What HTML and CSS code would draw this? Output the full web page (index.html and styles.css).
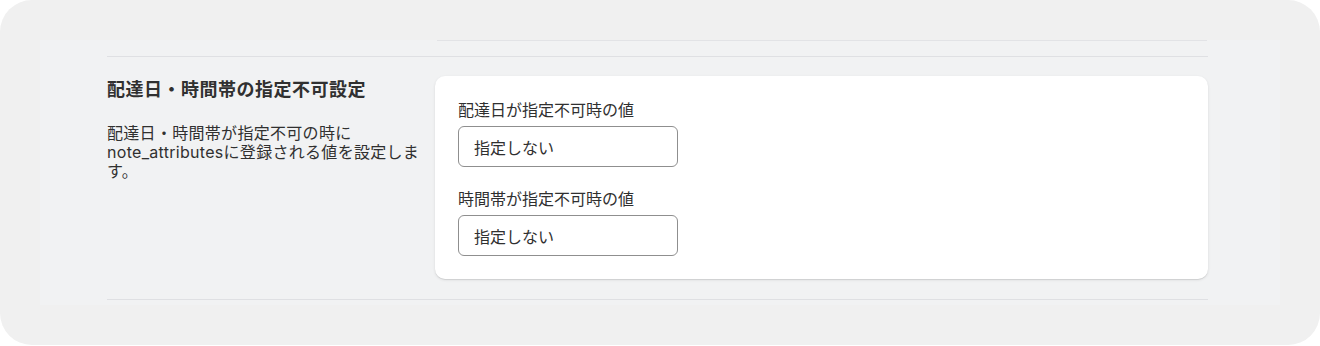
FILE: index.html
```html
<!DOCTYPE html>
<html lang="ja">
<head>
    <meta charset="UTF-8">
    <meta name="viewport" content="width=device-width, initial-scale=1.0">
    <title>配達日・時間帯の指定不可設定</title>
    <link rel="stylesheet" href="styles.css">
</head>
<body>
    <div class="frame">
        <div class="page">
            <div class="prev-card-edge"></div>

            <div class="section">
                <div class="section-info">
                    <h2 class="section-title">配達日・時間帯の指定不可設定</h2>
                    <p class="section-desc">配達日・時間帯が指定不可の時に note_attributesに登録される値を設定します。</p>
                </div>

                <div class="card">
                    <div class="field">
                        <label class="field-label" for="dateValue">配達日が指定不可時の値</label>
                        <input id="dateValue" class="text-input" type="text" value="指定しない">
                    </div>
                    <div class="field">
                        <label class="field-label" for="timeValue">時間帯が指定不可時の値</label>
                        <input id="timeValue" class="text-input" type="text" value="指定しない">
                    </div>
                </div>
            </div>
        </div>
    </div>
</body>
</html>
```

FILE: styles.css
```css
* {
    margin: 0;
    padding: 0;
    box-sizing: border-box;
    font-family: Inter, 'Noto Sans CJK JP', sans-serif;
}

body {
    background-color: #ffffff;
    color: #303030;
}

.frame {
    height: 345px;
    border-radius: 32px;
    background-color: #f0f0f0;
    padding: 40px 40px 40px 40px;
}

.page {
    height: 265px;
    background-color: #f1f2f3;
    padding: 0 72px 0 67px;
}

.prev-card-edge {
    height: 1px;
    margin-left: 330px;
    margin-right: 1px;
    background-color: #e2e3e6;
}

.section {
    margin-top: 15px;
    border-top: 1px solid #dfe0e3;
    border-bottom: 1px solid #dfe0e3;
    padding: 19px 0 20px;
    display: grid;
    grid-template-columns: 322px 1fr;
    gap: 6px;
}

.section-info {
    padding-top: 2px;
}

.section-title {
    font-size: 18px;
    line-height: 24px;
    font-weight: 700;
    letter-spacing: 0.5px;
}

.section-desc {
    margin-top: 22px;
    font-size: 16px;
    line-height: 19px;
    letter-spacing: 0.3px;
}

.card {
    background-color: #ffffff;
    border-radius: 10px;
    padding: 24px 23px 23px;
    box-shadow: 0 1px 0 rgba(0, 0, 0, 0.07), 0 1px 3px rgba(0, 0, 0, 0.1);
    display: flex;
    flex-direction: column;
    gap: 22px;
}

.field {
    display: flex;
    flex-direction: column;
    gap: 6px;
}

.field-label {
    font-size: 16px;
    line-height: 20px;
}

.text-input {
    width: 220px;
    height: 41px;
    border: 1px solid #8f8f8f;
    border-radius: 6px;
    padding: 0 15px;
    font-size: 16px;
    color: #303030;
    background-color: #ffffff;
}
```
